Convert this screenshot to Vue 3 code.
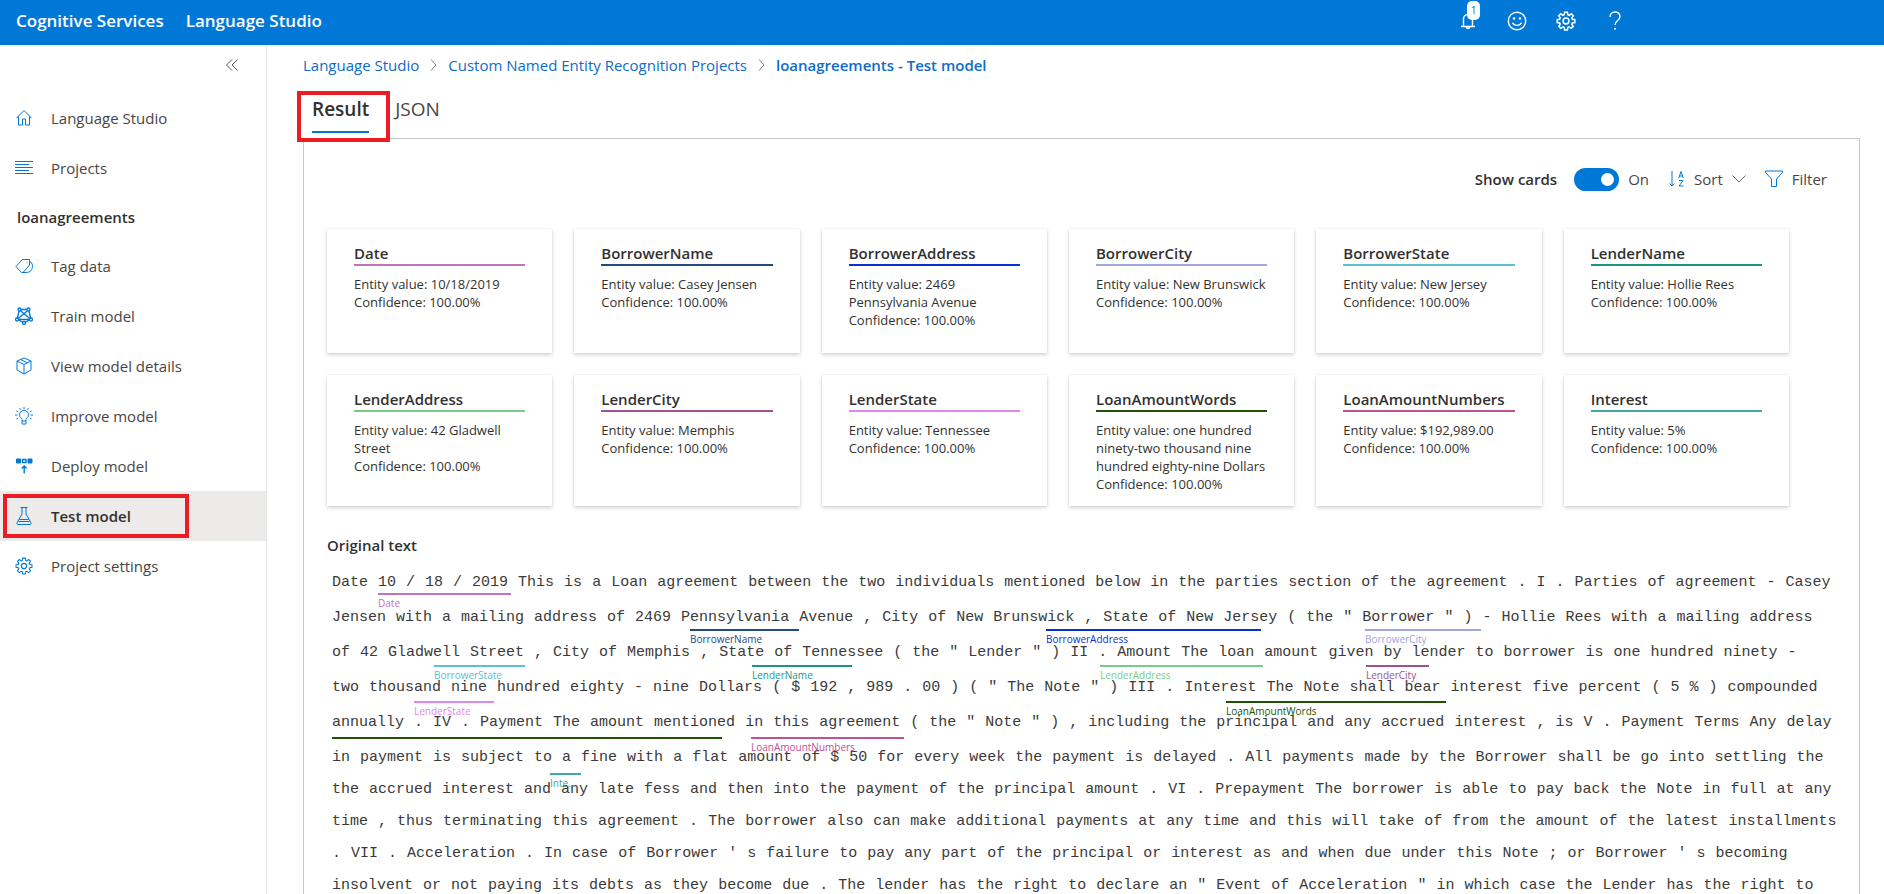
<script setup>
import { ref } from 'vue'

const showCards = ref(true)

const colors = {
  Date: '#c074bc',
  BorrowerName: '#26497f',
  BorrowerAddress: '#0a2ed2',
  BorrowerCity: '#a0a6de',
  BorrowerState: '#5ac1cf',
  LenderName: '#1b9584',
  LenderAddress: '#7acb87',
  LenderCity: '#9f5291',
  LenderState: '#de87ee',
  LoanAmountWords: '#225207',
  LoanAmountNumbers: '#c04f93',
  Interest: '#40a9a5'
}

const studioLinks = [
  { label: 'Language Studio', icon: 'home' },
  { label: 'Projects', icon: 'lines' }
]
const projectLinks = [
  { label: 'Tag data', icon: 'tag' },
  { label: 'Train model', icon: 'train' },
  { label: 'View model details', icon: 'cube' },
  { label: 'Improve model', icon: 'bulb' },
  { label: 'Deploy model', icon: 'deploy' },
  { label: 'Test model', icon: 'flask', current: true },
  { label: 'Project settings', icon: 'gear' }
]

const cards = [
  { name: 'Date', value: '10/18/2019' },
  { name: 'BorrowerName', value: 'Casey Jensen' },
  { name: 'BorrowerAddress', value: '2469 Pennsylvania Avenue' },
  { name: 'BorrowerCity', value: 'New Brunswick' },
  { name: 'BorrowerState', value: 'New Jersey' },
  { name: 'LenderName', value: 'Hollie Rees' },
  { name: 'LenderAddress', value: '42 Gladwell Street' },
  { name: 'LenderCity', value: 'Memphis' },
  { name: 'LenderState', value: 'Tennessee' },
  { name: 'LoanAmountWords', value: 'one hundred ninety-two thousand nine hundred eighty-nine Dollars' },
  { name: 'LoanAmountNumbers', value: '$192,989.00' },
  { name: 'Interest', value: '5%' }
]

const lines = [
  'Date 10 / 18 / 2019 This is a Loan agreement between the two individuals mentioned below in the parties section of the agreement . I . Parties of agreement - Casey',
  'Jensen with a mailing address of 2469 Pennsylvania Avenue , City of New Brunswick , State of New Jersey ( the " Borrower " ) - Hollie Rees with a mailing address',
  'of 42 Gladwell Street , City of Memphis , State of Tennessee ( the " Lender " ) II . Amount The loan amount given by lender to borrower is one hundred ninety -',
  'two thousand nine hundred eighty - nine Dollars ( $ 192 , 989 . 00 ) ( " The Note " ) III . Interest The Note shall bear interest five percent ( 5 % ) compounded',
  'annually . IV . Payment The amount mentioned in this agreement ( the " Note " ) , including the principal and any accrued interest , is V . Payment Terms Any delay',
  'in payment is subject to a fine with a flat amount of $ 50 for every week the payment is delayed . All payments made by the Borrower shall be go into settling the',
  'the accrued interest and any late fess and then into the payment of the principal amount . VI . Prepayment The borrower is able to pay back the Note in full at any',
  'time , thus terminating this agreement . The borrower also can make additional payments at any time and this will take of from the amount of the latest installments',
  ". VII . Acceleration . In case of Borrower ' s failure to pay any part of the principal or interest as and when due under this Note ; or Borrower ' s becoming",
  'insolvent or not paying its debts as they become due . The lender has the right to declare an " Event of Acceleration " in which case the Lender has the right to'
]

const marks = [
  [{ name: 'Date', x: 46, w: 133 }],
  [
    { name: 'BorrowerName', x: 358, w: 109 },
    { name: 'BorrowerAddress', x: 714, w: 215 },
    { name: 'BorrowerCity', x: 1033, w: 116 }
  ],
  [
    { name: 'BorrowerState', x: 102, w: 91 },
    { name: 'LenderName', x: 420, w: 100 },
    { name: 'LenderAddress', x: 768, w: 163 },
    { name: 'LenderCity', x: 1034, w: 63 }
  ],
  [
    { name: 'LenderState', x: 82, w: 80 },
    { name: 'LoanAmountWords', x: 894, w: 220 }
  ],
  [
    { name: 'LoanAmountWords', x: 0, w: 390, text: '' },
    { name: 'LoanAmountNumbers', x: 419, w: 153 }
  ],
  [{ name: 'Interest', x: 218, w: 31, text: 'Inte...' }]
]

const gearPath = 'M10.3 1.5h3.4l.5 3 1.6.7 2.5-1.8 2.4 2.4-1.8 2.5.7 1.6 3 .5v3.4l-3 .5-.7 1.6 1.8 2.5-2.4 2.4-2.5-1.8-1.6.7-.5 3h-3.4l-.5-3-1.6-.7-2.5 1.8-2.4-2.4 1.8-2.5-.7-1.6-3-.5v-3.4l3-.5.7-1.6-1.8-2.5 2.4-2.4 2.5 1.8 1.6-.7z'

const icons = {
  home: '<path d="M1.5 9 9 1.5 16.500 9M3.500 7.500V16h4v-6h3v6h4V7.500"/>',
  lines: '<path d="M0 2.500h18M0 5.500h14M0 8.500h18M0 11.500h14M0 14.500h18"/>',
  tag: '<path d="M1 9.500 7.500 2.500H14.500V8L8 15.500H6.500z"/><path d="M14.500 4c1.900 1.200 3 3 3 5.200 0 3.600-2.500 6.300-6 6.300H8"/><path d="M12 5.500v.8"/>',
  train: '<g stroke-width="1.300"><circle cx="4.500" cy="2.500" r="1.500"/><circle cx="13.500" cy="2.500" r="1.500"/><circle cx="2" cy="12.500" r="1.500"/><circle cx="16" cy="12.500" r="1.500"/><circle cx="9" cy="16" r="1.500"/><path d="M6 2.500h6M4 4 2.400 11M14 4l1.600 7M3.500 13l4 2.200M14.500 13l-4 2.200M3.500 12.500h11M5.500 3.800 14.800 11.600M12.500 3.800 3.200 11.600"/></g>',
  cube: '<path d="M9 1 16 4v9l-7 4-7-4V4zM2 4l7 3.500L16 4M9 7.500V17M5.500 2.500l7 3.400"/>',
  bulb: '<path d="M7 14v-1.500C7 11 4.500 10.300 4.500 7.800a4.500 4.500 0 0 1 9 0c0 2.500-2.500 3.200-2.500 4.700V14zM7 14v3h4v-3M9 0v2M4.500 1l1 1.600M13.500 1l-1 1.600M1.500 4l1.700 1M16.500 4l-1.700 1M0 8h2.500M15.500 8H18M1.500 12l1.700-1M16.500 12l-1.700-1"/>',
  deploy: '<path fill="#0078d7" d="M1.500 2h4v4h-4zM13 2h4v4h-4z"/><path stroke-width="1.400" d="M7.500 2.500h3.500v3h-3.500zM9.200 16.500V9M6.700 11.500 9.200 9l2.500 2.500"/>',
  flask: '<path d="M5.500.500h7M7 .500V7L2 15.800c-.4.800 0 1.700.9 1.700h12.200c.9 0 1.300-.9.900-1.700L11 7V.500M4.500 12.500h9M3.500 14.500h11"/>'
}
</script>

<template>
  <div class="shell">
    <header class="topbar">
      <a class="brand" href="#">Cognitive Services</a>
      <a class="brand" href="#">Language Studio</a>
      <div class="top-actions">
        <button type="button" aria-label="Notifications">
          <svg width="18" height="20" viewBox="0 0 18 20"><path d="M2 15.500h14M4.500 15.500V8a4.500 4.500 0 0 1 9 0v7.500M7.500 16c0 2 3 2 3 0" /></svg>
          <span class="count">1</span>
        </button>
        <button type="button" aria-label="Feedback">
          <svg width="20" height="20" viewBox="0 0 20 20"><circle cx="10" cy="10" r="8.700" /><path d="M5.500 11.800c1.500 3.400 7.500 3.400 9 0" /><circle class="dot" cx="7" cy="7.500" r="1.200" /><circle class="dot" cx="13" cy="7.500" r="1.200" /></svg>
        </button>
        <button type="button" aria-label="Settings">
          <svg width="20" height="20" viewBox="0 0 24 24" class="gear"><path :d="gearPath" /><circle cx="12" cy="12" r="3.500" /></svg>
        </button>
        <button type="button" aria-label="Help">
          <svg width="14" height="20" viewBox="0 0 14 20"><path d="M2 6c0-6.500 10-6.500 10-.5 0 4-5 4-5 8.500" /><circle class="dot" cx="7" cy="17.800" r="1" /></svg>
        </button>
      </div>
    </header>

    <div class="body">
      <aside class="sidebar">
        <div class="collapse-row">
          <button type="button" class="collapse" aria-label="Collapse navigation">
            <svg width="12" height="12" viewBox="0 0 12 12"><path d="M6 .5.500 6 6 11.500M11.500.500 6 6l5.500 5.500" /></svg>
          </button>
        </div>
        <nav>
          <a v-for="l in studioLinks" :key="l.label" href="#" class="link">
            <svg width="18" height="18" viewBox="0 0 18 18" v-html="icons[l.icon]"></svg>{{ l.label }}
          </a>
          <h2>loanagreements</h2>
          <a v-for="l in projectLinks" :key="l.label" href="#" class="link" :class="{ current: l.current }">
            <svg v-if="l.icon === 'gear'" width="18" height="18" viewBox="0 0 24 24" class="gear"><path :d="gearPath" /><circle cx="12" cy="12" r="3.500" /></svg>
            <svg v-else width="18" height="18" viewBox="0 0 18 18" v-html="icons[l.icon]"></svg>{{ l.label }}
          </a>
        </nav>
      </aside>

      <main>
        <nav class="crumbs" aria-label="Breadcrumb">
          <a href="#">Language Studio</a>
          <svg width="7" height="12" viewBox="0 0 7 12"><path d="m1 .5 5 5.500-5 5.500" /></svg>
          <a href="#">Custom Named Entity Recognition Projects</a>
          <svg width="7" height="12" viewBox="0 0 7 12"><path d="m1 .5 5 5.500-5 5.500" /></svg>
          <a href="#" class="here">loanagreements - Test model</a>
        </nav>

        <div class="tabs" role="tablist">
          <button type="button" role="tab" aria-selected="true" class="tab active">Result</button>
          <button type="button" role="tab" aria-selected="false" class="tab">JSON</button>
        </div>

        <section class="panel">
          <div class="tools">
            <label for="show-cards" class="strong">Show cards</label>
            <input id="show-cards" v-model="showCards" type="checkbox" role="switch" class="toggle" />
            <span class="state">{{ showCards ? 'On' : 'Off' }}</span>
            <button type="button" class="tool sort">
              <svg width="16" height="18" viewBox="0 0 16 18"><path d="M3 1v15M.500 13.500 3 16l2.500-2.500M9.800 8 12 1.500 14.200 8M10.500 6h3M10 10.500h4l-4 5.500h4.500" /></svg>
              Sort
              <svg class="chevron" width="14" height="8" viewBox="0 0 14 8"><path d="M.5.500 7 7 13.500.500" /></svg>
            </button>
            <button type="button" class="tool">
              <svg width="18" height="18" viewBox="0 0 18 18"><path d="M.500 1h17v1.500L11.500 9v7.500h-5V9L.500 2.500z" /></svg>
              Filter
            </button>
          </div>

          <div v-if="showCards" class="cards">
            <article v-for="c in cards" :key="c.name" class="card">
              <h3 :style="{ borderColor: colors[c.name] }">{{ c.name }}</h3>
              <p>Entity value: {{ c.value }}</p>
              <p>Confidence: 100.00%</p>
            </article>
          </div>

          <h2 class="doc-title">Original text</h2>
          <div class="doc">
            <p v-for="(line, i) in lines" :key="i" class="line" :class="{ marked: i < 5 }">
              <span v-for="(word, j) in line.split(' ')" :key="j">{{ word }}</span>
            </p>
            <div class="marks">
              <div v-for="(row, i) in marks" :key="i" class="mark-row">
                <span
                  v-for="m in row"
                  :key="m.name"
                  class="mark"
                  :style="{ left: m.x + 'px', width: m.w + 'px', color: colors[m.name] }"
                >{{ m.text ?? m.name }}</span>
              </div>
            </div>
          </div>
        </section>
      </main>
    </div>
  </div>
</template>

<style>
html,
body {
  margin: 0;
  background: #fff;
}
</style>

<style scoped>
.shell {
  height: 100vh;
  overflow: hidden;
  display: flex;
  flex-direction: column;
  font-family: 'Open Sans', 'Noto Sans', sans-serif;
  font-size: 15px;
  color: #323130;
}
h2,
h3,
p {
  margin: 0;
}
a {
  text-decoration: none;
}
button {
  border: 0;
  padding: 0;
  background: none;
  font: inherit;
  color: inherit;
}
svg {
  flex: none;
  fill: none;
  stroke: #0078d7;
  stroke-width: 1;
}
.gear {
  stroke-width: 1.4;
}

.topbar {
  flex: none;
  height: 45px;
  box-sizing: border-box;
  padding: 0 245px 4px 16px;
  display: flex;
  align-items: center;
  gap: 22px;
  background: #0078d7;
}
.brand {
  color: #fff;
  font-size: 17px;
  font-weight: 600;
}
.top-actions {
  margin-left: auto;
  display: flex;
}
.top-actions button {
  position: relative;
  width: 49px;
  height: 40px;
  display: flex;
  align-items: center;
  justify-content: center;
}
.top-actions svg {
  stroke: #fff;
  stroke-width: 1.4;
}
.top-actions .gear {
  stroke-width: 1.8;
}
.top-actions .dot {
  fill: #fff;
  stroke: none;
}
.count {
  position: absolute;
  left: 24px;
  top: 0;
  width: 13px;
  height: 19px;
  border-radius: 5px;
  background: #fff;
  color: #0078d7;
  font-size: 10px;
  line-height: 19px;
  text-align: center;
}

.body {
  flex: 1;
  min-height: 0;
  display: flex;
}
.sidebar {
  flex: none;
  width: 266px;
  border-right: 1px solid #e5e5e5;
}
.collapse-row {
  height: 48px;
  box-sizing: border-box;
  padding: 14px 28px 0 0;
  display: flex;
  justify-content: flex-end;
  align-items: flex-start;
}
.collapse {
  display: flex;
}
.collapse svg {
  stroke: #555;
}
.link {
  position: relative;
  height: 50px;
  padding-left: 15px;
  display: flex;
  align-items: center;
  gap: 18px;
  color: #484644;
}
.sidebar h2 {
  padding-left: 17px;
  font-size: 15px;
  font-weight: 600;
  line-height: 48px;
}
.current {
  background: #edebe9;
  color: #323130;
  font-weight: 600;
}
.current::after {
  content: '';
  position: absolute;
  inset: 3px 77px 3px 3px;
  border: 4px solid #ed1c24;
}

main {
  flex: 1;
  min-width: 0;
  padding: 0 24px 0 36px;
  display: flex;
  flex-direction: column;
}
.crumbs {
  flex: none;
  height: 40px;
  display: flex;
  align-items: center;
  gap: 11px;
}
.crumbs a {
  color: #0f6cc9;
}
.crumbs svg {
  stroke: #777;
}
.crumbs .here {
  font-weight: 600;
}
.tabs {
  flex: none;
  height: 53px;
  box-sizing: border-box;
  padding: 10px 0 0 9px;
  display: flex;
  align-items: flex-start;
  gap: 26px;
}
.tab {
  position: relative;
  height: 38px;
  box-sizing: border-box;
  padding-bottom: 8px;
  border-bottom: 2px solid transparent;
  color: #484644;
  font-size: 19px;
  line-height: 28px;
}
.active {
  color: #323130;
  border-color: #0078d7;
  font-weight: 600;
}
.active::after {
  content: '';
  position: absolute;
  inset: -4px -21px -11px -15px;
  border: 4px solid #ed1c24;
}
.panel {
  flex: 1 0 auto;
  padding: 28px 70px 0 23px;
  border: 1px solid #c8c6c4;
  border-bottom: 0;
}
.tools {
  height: 24px;
  margin-right: -38px;
  display: flex;
  align-items: center;
  justify-content: flex-end;
}
.strong {
  font-weight: 600;
}
.toggle {
  appearance: none;
  width: 45px;
  height: 23px;
  margin: 0 9px 0 17px;
  padding: 0 5px;
  border-radius: 12px;
  background: #8a8886;
  display: flex;
  align-items: center;
}
.toggle::before {
  content: '';
  width: 13px;
  height: 13px;
  border-radius: 50%;
  background: #fff;
}
.toggle:checked {
  background: #0078d7;
  justify-content: flex-end;
}
.state {
  color: #484644;
}
.tool {
  display: flex;
  align-items: center;
  gap: 9px;
  color: #484644;
}
.sort {
  margin: 0 19px 0 20px;
}
.chevron {
  stroke: #666;
}

.cards {
  margin-top: 38px;
  display: grid;
  grid-template-columns: repeat(6, minmax(0, 1fr));
  gap: 22px;
}
.card {
  min-height: 124px;
  box-sizing: border-box;
  padding: 14px 27px 13px;
  box-shadow: 0 2px 4px rgba(0, 0, 0, 0.16), 0 0 2px rgba(0, 0, 0, 0.1);
}
.card h3 {
  margin-bottom: 9px;
  border-bottom: 2px solid;
  font-size: 15px;
  font-weight: 600;
  line-height: 21px;
}
.card p {
  font-size: 13px;
  line-height: 18px;
}
.doc-title {
  margin-top: 28px;
  font-size: 15px;
  font-weight: 600;
  line-height: 22px;
}
.doc {
  position: relative;
  margin: 11px -48px 0 5px;
}
.line {
  height: 32px;
  display: flex;
  gap: 10px;
  color: #3b3a39;
  font-family: 'Liberation Mono', monospace;
  font-size: 15px;
  line-height: 32px;
  white-space: nowrap;
}
.marked {
  margin-bottom: 3px;
}
.marks {
  position: absolute;
  inset: 26px 0 auto 0;
}
.mark-row {
  position: relative;
  height: 36px;
}
.mark {
  position: absolute;
  top: 0;
  border-top: 2px solid;
  font-size: 10px;
  line-height: 16px;
  white-space: nowrap;
}
</style>
